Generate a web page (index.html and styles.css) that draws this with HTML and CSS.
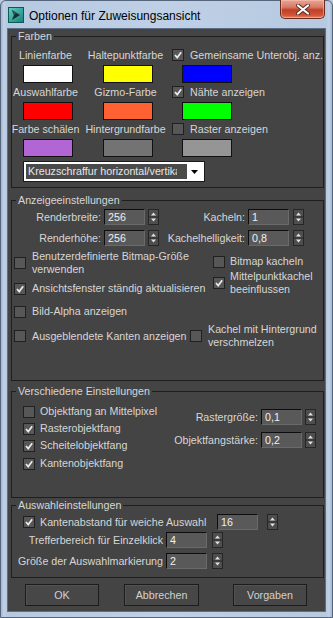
FILE: index.html
```html
<!DOCTYPE html>
<html>
	<head>
		<title>Optionen für Zuweisungsansicht</title>
		<link rel="stylesheet" href="styles.css">
	</head>
	<body>
		<div class="window">
			<div class="titlebar">
				<svg class="app-icon" width="16" height="16" viewBox="0 0 16 16">
					<defs>
						<linearGradient id="ig" x1="0" y1="0" x2="1" y2="1">
							<stop offset="0" stop-color="#5fd0c4"/>
							<stop offset="1" stop-color="#178078"/>
						</linearGradient>
					</defs>
					<rect x="0.5" y="0.5" width="15" height="15" fill="url(#ig)" stroke="#0d5a55"/>
					<path d="M4 3 L12 8 L4 13 L6 8 Z" fill="#1b2b2e"/>
					<path d="M4 3 L9 6.2 L6 8 Z" fill="#3a4d52"/>
				</svg>
				<span class="title">Optionen für Zuweisungsansicht</span>
				<div class="close">
					<svg width="16" height="11" viewBox="0 0 16 11">
						<path d="M3 1.5 L13 9.5 M13 1.5 L3 9.5" stroke="#5a2a22" stroke-width="4" stroke-linecap="round"/>
						<path d="M3 1.5 L13 9.5 M13 1.5 L3 9.5" stroke="#fff" stroke-width="2.2" stroke-linecap="round"/>
					</svg>
				</div>
			</div>
			<div class="client">

				<div class="group g-colors">
					<div class="legend">Farben</div>
					<div class="swatch-grid">
						<div class="sw-cell"><span class="sw-label">Linienfarbe</span><span class="swatch c-white"></span></div>
						<div class="sw-cell"><span class="sw-label">Haltepunktfarbe</span><span class="swatch c-yellow"></span></div>
						<div class="sw-cell check">
							<div class="check-line"><span class="cb on"><svg viewBox="0 0 10 10"><path d="M2 5 L4.2 7.6 L8.2 2.2"/></svg></span><span class="cb-text">Gemeinsame Unterobj. anz.</span></div>
							<span class="swatch c-blue"></span>
						</div>

						<div class="sw-cell"><span class="sw-label">Auswahlfarbe</span><span class="swatch c-red"></span></div>
						<div class="sw-cell"><span class="sw-label">Gizmo-Farbe</span><span class="swatch c-orange"></span></div>
						<div class="sw-cell check">
							<div class="check-line"><span class="cb on"><svg viewBox="0 0 10 10"><path d="M2 5 L4.2 7.6 L8.2 2.2"/></svg></span><span class="cb-text">Nähte anzeigen</span></div>
							<span class="swatch c-green"></span>
						</div>

						<div class="sw-cell"><span class="sw-label">Farbe schälen</span><span class="swatch c-purple"></span></div>
						<div class="sw-cell"><span class="sw-label">Hintergrundfarbe</span><span class="swatch c-gray"></span></div>
						<div class="sw-cell check">
							<div class="check-line"><span class="cb"></span><span class="cb-text">Raster anzeigen</span></div>
							<span class="swatch c-lightgray"></span>
						</div>
					</div>
					<div class="combo">
						<span class="combo-text"><span class="combo-clip">Kreuzschraffur horizontal/vertikal</span></span>
						<svg class="combo-arrow" width="7" height="4" viewBox="0 0 7 4"><path d="M0 0 H7 L3.5 4 Z" fill="#000"/></svg>
					</div>
				</div>

				<div class="group g-display">
					<div class="legend">Anzeigeeinstellungen</div>
					<div class="num-row first">
						<span class="lab w92">Renderbreite:</span>
						<span class="num">256</span>
						<span class="spin"><svg width="11" height="16" viewBox="0 0 11 16"><rect x="0.5" y="0.5" width="10" height="15" fill="#4e4e4e" stroke="#262626"/><path d="M1 8 H10" stroke="#262626"/><path d="M3 6.5 H8 L5.5 3.5 Z M3 9.5 H8 L5.5 12.5 Z" fill="#e2e2e2"/></svg></span>
						<span class="lab w89">Kacheln:</span>
						<span class="num">1</span>
						<span class="spin sp4"><svg width="11" height="16" viewBox="0 0 11 16"><rect x="0.5" y="0.5" width="10" height="15" fill="#4e4e4e" stroke="#262626"/><path d="M1 8 H10" stroke="#262626"/><path d="M3 6.5 H8 L5.5 3.5 Z M3 9.5 H8 L5.5 12.5 Z" fill="#e2e2e2"/></svg></span>
					</div>
					<div class="num-row second">
						<span class="lab w92">Renderhöhe:</span>
						<span class="num">256</span>
						<span class="spin"><svg width="11" height="16" viewBox="0 0 11 16"><rect x="0.5" y="0.5" width="10" height="15" fill="#4e4e4e" stroke="#262626"/><path d="M1 8 H10" stroke="#262626"/><path d="M3 6.5 H8 L5.5 3.5 Z M3 9.5 H8 L5.5 12.5 Z" fill="#e2e2e2"/></svg></span>
						<span class="lab w89">Kachelhelligkeit:</span>
						<span class="num">0,8</span>
						<span class="spin sp4"><svg width="11" height="16" viewBox="0 0 11 16"><rect x="0.5" y="0.5" width="10" height="15" fill="#4e4e4e" stroke="#262626"/><path d="M1 8 H10" stroke="#262626"/><path d="M3 6.5 H8 L5.5 3.5 Z M3 9.5 H8 L5.5 12.5 Z" fill="#e2e2e2"/></svg></span>
					</div>

					<div class="cb-cols">
						<div class="cb-col left">
							<div class="cbx"><span class="cb"></span><span class="cb-text">Benutzerdefinierte Bitmap-Größe<br>verwenden</span></div>
							<div class="cbx update"><span class="cb on"><svg viewBox="0 0 10 10"><path d="M2 5 L4.2 7.6 L8.2 2.2"/></svg></span><span class="cb-text">Ansichtsfenster ständig aktualisieren</span></div>
						</div>
						<div class="cb-col right">
							<div class="cbx tile"><span class="cb"></span><span class="cb-text">Bitmap kacheln</span></div>
							<div class="cbx center"><span class="cb on"><svg viewBox="0 0 10 10"><path d="M2 5 L4.2 7.6 L8.2 2.2"/></svg></span><span class="cb-text">Mittelpunktkachel<br>beeinflussen</span></div>
						</div>
					</div>
					<div class="cbx alpha"><span class="cb"></span><span class="cb-text">Bild-Alpha anzeigen</span></div>
					<div class="cb-pair">
						<div class="cbx hidden-edges"><span class="cb"></span><span class="cb-text">Ausgeblendete Kanten anzeigen</span></div>
						<div class="cbx blend"><span class="cb"></span><span class="cb-text">Kachel mit Hintergrund<br>verschmelzen</span></div>
					</div>
				</div>

				<div class="group g-misc">
					<div class="legend">Verschiedene Einstellungen</div>
					<div class="misc-cols">
						<div class="snap-list">
							<div class="cbx"><span class="cb"></span><span class="cb-text">Objektfang an Mittelpixel</span></div>
							<div class="cbx"><span class="cb on"><svg viewBox="0 0 10 10"><path d="M2 5 L4.2 7.6 L8.2 2.2"/></svg></span><span class="cb-text">Rasterobjektfang</span></div>
							<div class="cbx"><span class="cb on"><svg viewBox="0 0 10 10"><path d="M2 5 L4.2 7.6 L8.2 2.2"/></svg></span><span class="cb-text">Scheitelobjektfang</span></div>
							<div class="cbx last"><span class="cb on"><svg viewBox="0 0 10 10"><path d="M2 5 L4.2 7.6 L8.2 2.2"/></svg></span><span class="cb-text">Kantenobjektfang</span></div>
						</div>
						<div class="snap-values">
							<div class="num-row grid-size">
								<span class="lab">Rastergröße:</span>
								<span class="num">0,1</span>
								<span class="spin"><svg width="11" height="16" viewBox="0 0 11 16"><rect x="0.5" y="0.5" width="10" height="15" fill="#4e4e4e" stroke="#262626"/><path d="M1 8 H10" stroke="#262626"/><path d="M3 6.5 H8 L5.5 3.5 Z M3 9.5 H8 L5.5 12.5 Z" fill="#e2e2e2"/></svg></span>
							</div>
							<div class="num-row snap-strength">
								<span class="lab">Objektfangstärke:</span>
								<span class="num">0,2</span>
								<span class="spin"><svg width="11" height="16" viewBox="0 0 11 16"><rect x="0.5" y="0.5" width="10" height="15" fill="#4e4e4e" stroke="#262626"/><path d="M1 8 H10" stroke="#262626"/><path d="M3 6.5 H8 L5.5 3.5 Z M3 9.5 H8 L5.5 12.5 Z" fill="#e2e2e2"/></svg></span>
							</div>
						</div>
					</div>
				</div>

				<div class="group g-select">
					<div class="legend">Auswahleinstellungen</div>
					<div class="num-row soft">
						<span class="cb on"><svg viewBox="0 0 10 10"><path d="M2 5 L4.2 7.6 L8.2 2.2"/></svg></span>
						<span class="cb-text soft-text">Kantenabstand für weiche Auswahl</span>
						<span class="num">16</span>
						<span class="spin sp9"><svg width="11" height="16" viewBox="0 0 11 16"><rect x="0.5" y="0.5" width="10" height="15" fill="#4e4e4e" stroke="#262626"/><path d="M1 8 H10" stroke="#262626"/><path d="M3 6.5 H8 L5.5 3.5 Z M3 9.5 H8 L5.5 12.5 Z" fill="#e2e2e2"/></svg></span>
					</div>
					<div class="num-row pick">
						<span class="lab w154">Trefferbereich für Einzelklick</span>
						<span class="num">4</span>
						<span class="spin sp5"><svg width="11" height="16" viewBox="0 0 11 16"><rect x="0.5" y="0.5" width="10" height="15" fill="#4e4e4e" stroke="#262626"/><path d="M1 8 H10" stroke="#262626"/><path d="M3 6.5 H8 L5.5 3.5 Z M3 9.5 H8 L5.5 12.5 Z" fill="#e2e2e2"/></svg></span>
					</div>
					<div class="num-row marker">
						<span class="lab w154">Größe der Auswahlmarkierung</span>
						<span class="num">2</span>
						<span class="spin sp5"><svg width="11" height="16" viewBox="0 0 11 16"><rect x="0.5" y="0.5" width="10" height="15" fill="#4e4e4e" stroke="#262626"/><path d="M1 8 H10" stroke="#262626"/><path d="M3 6.5 H8 L5.5 3.5 Z M3 9.5 H8 L5.5 12.5 Z" fill="#e2e2e2"/></svg></span>
					</div>
				</div>

				<div class="buttons">
					<button class="btn ok">OK</button>
					<button class="btn cancel">Abbrechen</button>
					<button class="btn defaults">Vorgaben</button>
				</div>
			</div>
		</div>
	</body>
</html>
```

FILE: styles.css
```css
body {margin:0;font-family:"Liberation Sans",Arial,sans-serif;font-size:10.7px;color:#d6d6d6;background:#b9cbe0;}

/* window frame */
.window {width:333px;height:618px;box-sizing:border-box;border:1px solid #54657c;border-radius:6px 6px 0 0;padding:0 6px 5px 6px;display:flex;flex-direction:column;background:linear-gradient(90deg,#a4b8d2 0,#c0d1e7 3px,#b6c9e0 6px,#bfd0e6 50%,#b6c9e0 calc(100% - 6px),#c0d1e7 calc(100% - 3px),#a4b8d2 100%);}
.titlebar {height:27px;display:flex;align-items:flex-start;flex-shrink:0;}
.app-icon {margin:6px 0 0 1px;}
.title {margin:7px 0 0 5px;line-height:16px;font-size:12px;color:#000;}
.close {margin:-1px 1px 0 auto;width:45px;height:19px;box-sizing:border-box;border:1px solid #6b2a1e;border-top:0;border-radius:0 0 5px 5px;display:flex;align-items:center;justify-content:center;background:linear-gradient(#e9a595 0,#d67a66 40%,#c23f24 55%,#d0553a 85%,#e38a6c 100%);box-shadow:inset 0 0 0 1px rgba(255,200,190,0.5);}

.client {flex:1;background:#444;border:1px solid #5d6f88;padding:0 1px 0 3px;display:flex;flex-direction:column;}

/* group boxes */
.group {border:1px solid #1e1e1e;box-sizing:border-box;flex-shrink:0;}
.legend {width:fit-content;margin:-8px 0 0 4px;padding:0 2px;background:#444;line-height:14px;white-space:nowrap;}
.g-colors {margin-top:7px;height:152px;}
.g-display {margin-top:12px;height:181px;}
.g-misc {margin-top:10px;height:107px;}
.g-select {margin-top:7px;height:73px;}

/* colour swatches */
.swatch-grid {display:grid;grid-template-columns:72px 88px 1fr;row-gap:1px;margin-top:4px;}
.sw-cell {display:flex;flex-direction:column;align-items:center;}
.sw-label {line-height:16px;white-space:nowrap;margin-right:5px;}
.swatch {width:50px;height:18px;box-sizing:border-box;border:1px solid #111;margin-top:2px;}
.sw-cell.check {align-items:flex-start;}
.sw-cell.check .swatch {margin-left:10px;}
.check-line {display:flex;align-items:center;height:16px;white-space:nowrap;}
.check-line .cb-text {margin-left:6px;}
.c-white {background:#fff;}
.c-yellow {background:#ffff00;}
.c-blue {background:#0000ff;}
.c-red {background:#ff0000;}
.c-orange {background:#ff6133;}
.c-green {background:#00ff00;}
.c-purple {background:#b266d6;}
.c-gray {background:#737373;}
.c-lightgray {background:#959595;}

.combo {margin:4px 0 0 11px;width:182px;height:21px;box-sizing:border-box;border:1px solid #1a1a1a;background:#fff;display:flex;align-items:center;padding:0 2px;}
.combo-text {width:161px;line-height:15px;background:#4a4a4a;color:#e6e6e6;padding-left:2px;box-sizing:border-box;}
.combo-clip {display:block;width:149px;white-space:nowrap;overflow:hidden;}
.combo-arrow {margin-left:auto;margin-right:4px;}

/* checkboxes */
.cb {width:12px;height:12px;box-sizing:border-box;border:1px solid #202020;background:#575757;flex-shrink:0;display:block;}
.cb svg {display:block;width:10px;height:10px;}
.cb svg path {fill:none;stroke:#ececec;stroke-width:1.7;}
.cbx {display:flex;align-items:center;line-height:13px;white-space:nowrap;}
.cbx .cb-text {margin-left:6px;}

/* numeric fields */
.num-row {display:flex;align-items:center;height:16px;white-space:nowrap;}
.lab {text-align:right;padding-right:3px;box-sizing:border-box;flex-shrink:0;}
.w92 {width:92px;}
.w89 {width:89px;}
.w154 {width:154px;}
.num {width:41px;height:16px;box-sizing:border-box;background:#595959;border-top:1px solid #0e0e0e;border-left:1px solid #0e0e0e;border-right:1px solid #6a6a6a;border-bottom:1px solid #6a6a6a;color:#f0f0f0;padding-left:3px;line-height:14px;flex-shrink:0;}
.spin {margin-left:3px;display:block;height:16px;}
.spin svg {display:block;}
.spin.sp4 {margin-left:4px;}
.spin.sp5 {margin-left:5px;}
.spin.sp9 {margin-left:9px;}

/* display settings */
.num-row.first {margin-top:2px;}
.num-row.second {margin-top:5px;}
.cb-cols {display:flex;margin-top:4px;}
.cb-col.left {width:201px;}
.cb-col.left .cbx {margin-left:2px;}
.cbx.update {margin-top:6px;}
.cbx.tile {margin-top:5px;}
.cbx.center {margin-top:2px;}
.cb-col.right .cbx .cb-text {margin-left:5px;}
.cbx.alpha {margin:9px 0 0 2px;}
.cb-pair {display:flex;align-items:center;margin-top:5px;}
.cbx.hidden-edges {width:176px;margin-left:2px;}

/* misc settings */
.misc-cols {display:flex;}
.snap-list {margin-left:11px;}
.snap-list .cbx {margin-top:4px;}
.snap-list .cbx:first-child {margin-top:7px;}
.snap-list .cbx.last {margin-top:5px;}
.snap-list .cb-text {margin-left:5px;}
.snap-values {margin:0 7px 0 auto;}
.num-row.grid-size {margin-top:11px;justify-content:flex-end;}
.num-row.snap-strength {margin-top:7px;justify-content:flex-end;}

/* selection settings */
.num-row.soft {margin-top:2px;padding-left:11px;}
.soft-text {width:177px;margin-left:5px;}
.num-row.pick {margin-top:2px;}
.num-row.marker {margin-top:5px;}

/* buttons */
.buttons {display:flex;margin-top:6px;flex-shrink:0;}
.btn {height:22px;box-sizing:border-box;border:1px solid #1c1c1c;background:#474747;color:#d2d2d2;font-family:"Liberation Sans",Arial,sans-serif;font-size:10.7px;padding:0;box-shadow:inset 1px 1px 0 #525252;}
.btn.ok {width:74px;margin-left:14px;}
.btn.cancel {width:75px;margin-left:25px;}
.btn.defaults {width:74px;margin-left:34px;}
```
